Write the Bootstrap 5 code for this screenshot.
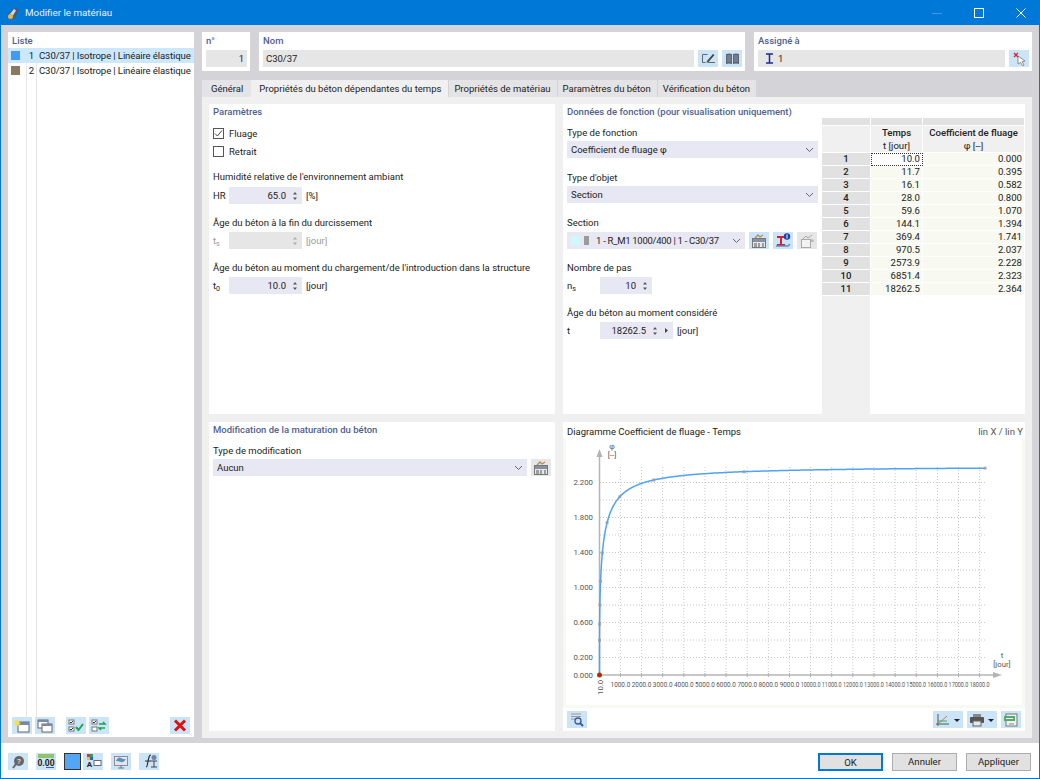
<!DOCTYPE html>
<html lang="fr">
<head>
<meta charset="UTF-8" />
<title>Modifier le matériau</title>
<link href="https://cdn.jsdelivr.net/npm/bootstrap@5.3.3/dist/css/bootstrap.min.css" rel="stylesheet" />
<style>
  html, body { height: 779px; overflow: hidden; }
  body { font: 9.5px/13px Roboto, "Noto Sans", sans-serif; color: #222; background: #fff; }
  .dlg { width: 1040px; height: 779px; border: 1px solid #0078d7; border-top: 0; display: flex; flex-direction: column; }
  .dlg-title { height: 25px; background: #0078d7; color: #e8f3fc; font-size: 9.8px; padding-left: 6px; gap: 5px; flex: none; }
  .win-btn { width: 37px; height: 25px; display: flex; align-items: center; justify-content: center; }
  .dlg-body { height: 718px; flex: none; background: #d4d4d8; padding: 7px 7px 6px; gap: 8px; display: flex; }
  .list-pane { width: 186px; background: #fff; display: flex; flex-direction: column; position: relative; }
  .pane-head { color: #50618f; font-weight: 500; padding: 2px 4px 0; height: 16px; flex: none; }
  .list-pane .list-group { flex: 1; border-radius: 0; background: linear-gradient(#e6e6e6,#e6e6e6) 18px 0/1px 100% no-repeat, linear-gradient(#e6e6e6,#e6e6e6) 28px 0/1px 100% no-repeat; }
  .list-pane .list-group-item { border: 0; padding: 0; height: 15px; display: flex; align-items: center; background: transparent; color: #222; font-size: 9.6px; letter-spacing: -.12px; white-space: nowrap; }
  .list-pane .list-group-item.active { background: #cce8ff; color: #222; }
  .swatch { width: 9px; height: 9px; margin-left: 3px; flex: none; }
  .row-num { width: 14px; text-align: right; flex: none; margin-right: 5px; }
  .list-tools { height: 20px; flex: none; padding: 0 4px; gap: 3px; display: flex; }
  .ico { width: 20px; height: 17px; background: #cce4f7; border: 0; padding: 0; display: inline-flex; align-items: center; justify-content: center; flex: none; }
  .ico.off { background: #e6e6e6; }
  .ico svg { display: block; }
  .main-col { width: 830px; display: flex; flex-direction: column; }
  .top-row { display: flex; gap: 9px; height: 39px; flex: none; margin-bottom: 9px; }
  .top-box { background: #fff; padding: 2px 3px 0 4px; }
  .top-box .pane-head { padding: 0; height: 16px; }
  .box-no { width: 48px; } .box-name { width: 486px; } .box-asg { width: 278px; }
  .grey-in { background: #e6e6e6; height: 17px; padding: 0 3px; display: flex; align-items: center; }
  .tab-strip.nav-tabs { height: 17px; border: 0; flex: none; gap: 1px; }
  .tab-strip .nav-link { height: 17px; padding: 0 6px 0 5px; border: 0; border-radius: 0; background: #e4e4e6; color: #222; font-size: 9.5px; line-height: 17px; margin: 0; }
  .tab-strip .nav-item:first-child { margin-right: -1px; }
  .tab-strip .nav-item:first-child .nav-link { padding: 0 8px 0 9px; }
  .tab-strip .nav-link.active { background: #f0f0f0; color: #222; padding: 0 7px 0 8px; }
  .tab-pane-box { flex: 1; background: #f0f0f0; padding: 7px; display: grid; grid-template-columns: 346px 462px; grid-template-rows: 310px 309px; column-gap: 8px; row-gap: 8px; }
  .panel-w { background: #fff; padding: 1px 4px 0; position: relative; min-width: 0; }
  .panel-w .pane-head { padding: 0; margin: 0; height: 14px; line-height: 13px; }
  .f-label { height: 13px; white-space: nowrap; margin-top: 12px; }
  .fld-row { display: flex; align-items: center; height: 17px; margin-top: 3px; }
  .fld-row .sym { width: 16px; flex: none; }
  .spin-box { background: #e8e8f4; height: 17px; display: flex; align-items: center; justify-content: flex-end; padding-right: 4px; gap: 6px; }
  .spin-box.off { background: #e6e6e6; }
  .spin-box .form-control { background: transparent; border: 0; border-radius: 0; box-shadow: none; padding: 0; text-align: right; font-size: 9.5px; line-height: 13px; min-height: 0; height: 13px; color: #222; flex: 1; min-width: 0; }
  .w73 { width: 73px; } .w52 { width: 52px; }
  .unit { margin-left: 4px; }
  .dim { color: #9a9a9a; }
  .chk-line { display: flex; align-items: center; height: 18px; margin: 0; gap: 5px; padding: 0; min-height: 0; }
  .chk-line .form-check-input { width: 11px; height: 11px; margin: 0; border: 1px solid #555; border-radius: 0; background-color: #fff; float: none; flex: none; }
  .chk-line .form-check-input:checked { background-color: #fff; border-color: #555; background-image: url("data:image/svg+xml,%3csvg xmlns='http://www.w3.org/2000/svg' viewBox='0 0 11 11'%3e%3cpath fill='none' stroke='%23444' d='M2 5.5l2.4 2.5L9 2.5'/%3e%3c/svg%3e"); background-size: 11px; }
  .chk-line .form-check-label { line-height: 13px; }
  .sel-w.form-select { background-color: #e8e8f4; border: 0; border-radius: 0; height: 17px; min-height: 0; margin-top: 2px; padding: 0 20px 0 4px; font-size: 9.5px; line-height: 17px; color: #222; background-image: url("data:image/svg+xml,%3csvg xmlns='http://www.w3.org/2000/svg' viewBox='0 0 9 6'%3e%3cpath fill='none' stroke='%23666' d='M1 1l3.5 3.5L8 1'/%3e%3c/svg%3e"); background-size: 9px 6px; background-position: right 4px center; box-shadow: none; }
  .func-col { width: 251px; }
  .sec-pick { width: 178px; height: 17px; background: #e8e8f4; display: flex; align-items: center; padding-left: 4px; white-space: nowrap; flex: none; }
  .sec-text { letter-spacing: -.28px; }
  .tbl-wrap { position: absolute; left: 259px; top: 14px; width: 203px; height: 296px; background: linear-gradient(#f0f0f0,#f0f0f0) 0 0/48px 100% no-repeat; }
  .tbl-wrap .table { --bs-table-bg: transparent; --bs-table-border-color: #fff; margin: 0; width: 203px; table-layout: fixed; font-size: 9.6px; color: #222; border-collapse: separate; border-spacing: 0; }
  .tbl-wrap .table th, .tbl-wrap .table td { padding: 0 2px; height: 13px; line-height: 12px; border: 0; border-right: 1px solid #fff; border-bottom: 1px solid #fff; font-weight: 400; vertical-align: middle; }
  .tbl-wrap thead tr:first-child th { height: 8px; background: #e1e1e1; padding: 0; line-height: 0; }
  .tbl-wrap thead tr.hd-row th { height: 26px; background: #f0f0f0; text-align: center; font-weight: 500; line-height: 13px; }
  .tbl-wrap thead tr.hd-row th span { font-weight: 400; }
  .tbl-wrap tbody th { background: #e1e1e1 !important; text-align: center; font-weight: 500 !important; }
  .tbl-wrap tbody td { background: #f8f9f0; text-align: right; padding-right: 3px; }
  .tbl-wrap tbody tr:first-child td:nth-child(2) { background: #fff; outline: 1px dotted #333; outline-offset: -1px; }
  .diag-top { display: flex; justify-content: space-between; height: 15px; padding-top: 2px; margin-right: -2px; }
  .diag-scale { color: #555; }
  .diag-area { position: absolute; left: 0; top: 16px; width: 462px; height: 270px; background: #f9f9f3; padding: 0 3px 3px 3px; }
  .diag-area svg { display: block; background: #fff; }
  .diag-area text { font: 7.8px Roboto, sans-serif; fill: #555; }
  .diag-tools { position: absolute; left: 4px; right: 4px; bottom: 3px; display: flex; justify-content: space-between; }
  .dlg-foot { flex: 1; display: flex; align-items: center; justify-content: space-between; padding: 2px 8px 0 7px; }
  .foot-btns { display: flex; gap: 8px; }
  .foot-btns .ico { width: 20px; }
  .colour-btn { width: 17px; height: 17px; background: #55a5f5; border: 1px solid #333; margin-right: -6px; }
  .btn-dlg.btn { width: 65px; height: 18px; padding: 0; border-radius: 0; background: #e1e1e1; border: 1px solid #adadad; font-size: 9.6px; line-height: 15px; color: #222; }
  .btn-dlg.btn-ok { border: 2px solid #0078d7; }
  .foot-actions { display: flex; gap: 9px; }
</style>
</head>
<body>
<svg width="0" height="0" class="position-absolute">
  <defs>
    <symbol id="i-sheet" viewBox="0 0 16 14"><rect x="4" y="3" width="11" height="10" fill="#fff" stroke="#666"/><rect x="4" y="3" width="11" height="3" fill="#7b8aa0"/></symbol>
    <symbol id="i-cal" viewBox="0 0 16 14"><rect x="1.500" y="4.500" width="13" height="9" fill="#e8e8e8" stroke="#777"/><rect x="2" y="5" width="12" height="3" fill="#8590a3"/><path d="M3 10h3M7 10h2M11 10h2M3 12h3M7 12h2M11 12h2" stroke="#555"/><path d="M4 4l3-3 2 2 3-2" fill="none" stroke="#b08d57" stroke-width="1.300"/></symbol>
    <symbol id="i-spin" viewBox="0 0 6 12"><path d="M1 4.500l2-2.500 2 2.500zM1 7.500l2 2.500 2-2.500z" fill="#555"/></symbol>
  </defs>
</svg>

<div class="dlg">
  <!-- barre de titre -->
  <div class="dlg-title d-flex align-items-center">
    <svg width="13" height="14" viewBox="0 0 13 14"><path d="M1 9l7-8 4 3-5 9H3z" fill="#4d5a73"/><path d="M3 8l4-5 2 1.500-3 5z" fill="#cfd8e6"/><circle cx="3.500" cy="10.500" r="2.500" fill="#e8b93a"/></svg>
    <span class="flex-grow-1">Modifier le matériau</span>
    <div class="win-btn"><svg width="10" height="10"><path d="M0 5.500h10" stroke="#3f9ae3"/></svg></div>
    <div class="win-btn"><svg width="10" height="10"><rect x=".5" y=".5" width="9" height="9" fill="none" stroke="#fff"/></svg></div>
    <div class="win-btn"><svg width="10" height="10"><path d="M.5.5l9 9M9.500.5l-9 9" stroke="#fff"/></svg></div>
  </div>

  <div class="dlg-body">
    <!-- liste -->
    <div class="list-pane">
      <div class="pane-head">Liste</div>
      <ul class="list-group" id="matList">
        <li class="list-group-item active"><span class="swatch" style="background:#3f9cf0"></span><span class="row-num">1</span>C30/37 | Isotrope | Linéaire élastique</li>
        <li class="list-group-item"><span class="swatch" style="background:#8c7860"></span><span class="row-num">2</span>C30/37 | Isotrope | Linéaire élastique</li>
      </ul>
      <div class="list-tools">
        <button class="ico"><svg width="16" height="14"><use href="#i-sheet"/><path d="M3 0l.8 2 2-.8-.8 2 2 .8-2 .8.8 2-2-.8-.8 2-.8-2-2 .8.800-2-2-.8 2-.8-.8-2 2 .8z" fill="#f4e04a"/></svg></button>
        <button class="ico"><svg width="16" height="14" viewBox="0 0 16 14"><rect x="1" y="1" width="10" height="8" fill="#fff" stroke="#666"/><rect x="1" y="1" width="10" height="2" fill="#7b8aa0"/><rect x="5" y="5" width="10" height="8" fill="#fff" stroke="#666"/><rect x="5" y="5" width="10" height="2" fill="#7b8aa0"/></svg></button>
        <button class="ico ms-2"><svg width="16" height="14" viewBox="0 0 16 14"><rect x="1" y="1" width="5" height="4" fill="#fff" stroke="#777"/><rect x="1" y="8" width="5" height="4" fill="#fff" stroke="#777"/><path d="M2 3l1 1 2-2M2 10l1 1 2-2" fill="none" stroke="#333"/><path d="M8 8l2.500 3L15 5" fill="none" stroke="#18a84a" stroke-width="2"/></svg></button>
        <button class="ico"><svg width="16" height="14" viewBox="0 0 16 14"><rect x="1" y="1" width="5" height="4" fill="#fff" stroke="#777"/><rect x="1" y="8" width="5" height="4" fill="#fff" stroke="#777"/><path d="M2 3l1 1 2-2" fill="none" stroke="#333"/><path d="M8 5h6l-2-2M14 9H8l2 2" fill="none" stroke="#18a84a" stroke-width="1.500"/></svg></button>
        <button class="ico ms-auto"><svg width="14" height="13" viewBox="0 0 14 13"><path d="M2 1.500l10 10M12 1.500l-10 10" stroke="#e01010" stroke-width="3"/></svg></button>
      </div>
    </div>

    <div class="main-col">
      <div class="top-row">
        <div class="top-box box-no">
          <div class="pane-head">n°</div>
          <div class="grey-in justify-content-end">1</div>
        </div>
        <div class="top-box box-name">
          <div class="pane-head">Nom</div>
          <div class="d-flex">
            <div class="grey-in flex-grow-1 me-1">C30/37</div>
            <button class="ico me-1"><svg width="15" height="13" viewBox="0 0 15 13"><path d="M1.500 2.500h5M1.500 2.500v8h3M7 10.500h7" fill="none" stroke="#666"/><path d="M6 9l6-7 1.500 1-6 7-2 .8z" fill="#444"/></svg></button>
            <button class="ico"><svg width="15" height="13" viewBox="0 0 15 13"><path d="M1 2q3-1 6 0v10q-3-1-6 0zM8 2q3-1 6 0v10q-3-1-6 0z" fill="#5d6470"/><path d="M3 3v7M5 3v7M10 3v7M12 3v7" stroke="#a7adb7" stroke-width=".7"/></svg></button>
          </div>
        </div>
        <div class="top-box box-asg">
          <div class="pane-head">Assigné à</div>
          <div class="d-flex gap-1">
            <div class="grey-in flex-grow-1"><svg width="9" height="11" viewBox="0 0 9 11" class="me-1 ms-1"><path d="M1 1h7M1 10h7M4.500 1v9" stroke="#1a2a9a" stroke-width="1.500" fill="none"/></svg>1</div>
            <button class="ico"><svg width="15" height="14" viewBox="0 0 15 14"><path d="M6 4l7 5-3 .5 2 3.500-1.500.8-2-3.500L6 12z" fill="#fff" stroke="#777" stroke-width=".8"/><path d="M2 1l4 4M6 1L2 5" stroke="#d8202a" stroke-width="1.300"/></svg></button>
          </div>
        </div>
      </div>

      <ul class="nav nav-tabs tab-strip">
        <li class="nav-item"><a class="nav-link" href="#">Général</a></li>
        <li class="nav-item"><a class="nav-link active" href="#">Propriétés du béton dépendantes du temps</a></li>
        <li class="nav-item"><a class="nav-link" href="#">Propriétés de matériau</a></li>
        <li class="nav-item"><a class="nav-link" href="#">Paramètres du béton</a></li>
        <li class="nav-item"><a class="nav-link" href="#">Vérification du béton</a></li>
      </ul>

      <div class="tab-pane-box">
        <!-- Paramètres -->
        <section class="panel-w">
          <div class="pane-head">Paramètres</div>
          <div class="form-check chk-line" style="margin-top:5px"><input class="form-check-input" type="checkbox" id="chkF" checked><label class="form-check-label" for="chkF">Fluage</label></div>
          <div class="form-check chk-line"><input class="form-check-input" type="checkbox" id="chkR"><label class="form-check-label" for="chkR">Retrait</label></div>
          <div class="f-label" style="margin-top:10px">Humidité relative de l'environnement ambiant</div>
          <div class="fld-row" style="margin-top:4px"><span class="sym">HR</span><div class="spin-box w73"><input class="form-control" value="65.0"><svg width="6" height="12"><use href="#i-spin"/></svg></div><span class="unit">[%]</span></div>
          <div class="f-label">Âge du béton à la fin du durcissement</div>
          <div class="fld-row dim"><span class="sym">t<sub>s</sub></span><div class="spin-box off w73"><input class="form-control" disabled value=""><svg width="6" height="12" viewBox="0 0 6 12"><path d="M1 4.500l2-2.500 2 2.500zM1 7.500l2 2.500 2-2.500z" fill="#aaa"/></svg></div><span class="unit">[jour]</span></div>
          <div class="f-label">Âge du béton au moment du chargement/de l'introduction dans la structure</div>
          <div class="fld-row"><span class="sym">t<sub>0</sub></span><div class="spin-box w73"><input class="form-control" value="10.0"><svg width="6" height="12"><use href="#i-spin"/></svg></div><span class="unit">[jour]</span></div>
        </section>

        <!-- Données de fonction -->
        <section class="panel-w">
          <div class="pane-head">Données de fonction (pour visualisation uniquement)</div>
          <div class="func-col">
            <div class="f-label" style="margin-top:7px">Type de fonction</div>
            <select class="form-select sel-w"><option>Coefficient de fluage φ</option></select>
            <div class="f-label" style="margin-top:13px">Type d'objet</div>
            <select class="form-select sel-w"><option>Section</option></select>
            <div class="f-label" style="margin-top:13px">Section</div>
            <div class="d-flex gap-1" style="margin-top:3px">
              <div class="sec-pick"><span class="swatch" style="background:#ccfbfb;margin:0 4px 0 0"></span><span class="swatch" style="background:#9a9a9a;width:5px;margin:0 7px 0 0"></span><span class="sec-text">1 - R_M1 1000/400 | 1 - C30/37</span><svg class="ms-auto me-1" width="9" height="6" viewBox="0 0 9 6"><path d="M1 1l3.500 3.500L8 1" fill="none" stroke="#666"/></svg></div>
              <button class="ico"><svg width="16" height="14"><use href="#i-cal"/></svg></button>
              <button class="ico"><svg width="16" height="15" viewBox="0 0 16 15"><path d="M2 3h8v2H7v6h3v2H2v-2h3V5H2z" fill="#d8202a"/><path d="M1 13h12l2-2" fill="none" stroke="#5a8fc8" stroke-width="1.500"/><circle cx="12" cy="3.500" r="3.200" fill="#1b3fb0"/><path d="M12 1.500v4" stroke="#fff"/></svg></button>
              <button class="ico off"><svg width="16" height="14" viewBox="0 0 16 14"><rect x="2.500" y="5.500" width="9" height="8" fill="#f2f2f2" stroke="#aaa"/><path d="M4 5l3-3 2 2 4-3M13 5v3M12 7h3" fill="none" stroke="#aaa"/></svg></button>
            </div>
            <div class="f-label">Nombre de pas</div>
            <div class="fld-row"><span class="sym" style="width:33px">n<sub>s</sub></span><div class="spin-box w52"><input class="form-control" value="10"><svg width="6" height="12"><use href="#i-spin"/></svg></div></div>
            <div class="f-label">Âge du béton au moment considéré</div>
            <div class="fld-row"><span class="sym" style="width:33px">t</span><div class="spin-box w73"><input class="form-control" value="18262.5"><svg width="6" height="12"><use href="#i-spin"/></svg><svg width="5" height="7" viewBox="0 0 5 7"><path d="M1 1l3 2.500-3 2.500z" fill="#444"/></svg></div><span class="unit">[jour]</span></div>
          </div>
          <div class="tbl-wrap">
            <table class="table">
              <colgroup><col style="width:49px"><col style="width:52px"><col style="width:102px"></colgroup>
              <thead>
                <tr><th></th><th></th><th></th></tr>
                <tr class="hd-row"><th></th><th>Temps<br><span>t [jour]</span></th><th>Coefficient de fluage<br><span>φ [--]</span></th></tr>
              </thead>
              <tbody id="creepRows"></tbody>
            </table>
          </div>
        </section>

        <!-- Modification de la maturation -->
        <section class="panel-w">
          <div class="pane-head">Modification de la maturation du béton</div>
          <div class="f-label" style="margin-top:7px">Type de modification</div>
          <div class="d-flex gap-1">
            <select class="form-select sel-w flex-grow-1"><option>Aucun</option></select>
            <button class="ico off mt-auto"><svg width="16" height="14"><use href="#i-cal"/></svg></button>
          </div>
        </section>

        <!-- Diagramme -->
        <section class="panel-w">
          <div class="diag-top"><span>Diagramme Coefficient de fluage - Temps</span><span class="diag-scale">lin X / lin Y</span></div>
          <div class="diag-area">
            <svg id="chart" width="456" height="267" viewBox="566 438 456 267"></svg>
          </div>
          <div class="diag-tools">
            <button class="ico"><svg width="16" height="14" viewBox="0 0 16 14"><path d="M2 1h10M2 3.500h10M2 6h5" stroke="#999"/><circle cx="9" cy="8" r="3" fill="#cfe2f5" stroke="#3c5a90" stroke-width="1.300"/><path d="M11 10l3 3" stroke="#3c5a90" stroke-width="2"/></svg></button>
            <div class="d-flex gap-1">
              <button class="ico" style="width:30px"><svg width="26" height="14" viewBox="0 0 26 14"><path d="M3 1v12M1 11h13" stroke="#555"/><path d="M3 11L12 3" stroke="#c9794a"/><path d="M3 8h9" stroke="#39a36c"/><path d="M19 6l3 3 3-3z" fill="#222"/></svg></button>
              <button class="ico" style="width:30px"><svg width="26" height="14" viewBox="0 0 26 14"><path d="M4 1h8v3H4z" fill="#888"/><rect x="1" y="4" width="14" height="6" rx="1" fill="#555"/><rect x="4" y="8" width="8" height="5" fill="#e8e8e8" stroke="#666"/><path d="M19 6l3 3 3-3z" fill="#222"/></svg></button>
              <button class="ico"><svg width="16" height="14" viewBox="0 0 16 14"><rect x="3" y="1" width="11" height="12" fill="#eef3ee" stroke="#777"/><rect x="1" y="3" width="11" height="5" fill="#57a86b"/><path d="M3 5.500h7" stroke="#fff"/><path d="M6 10h5v3H6z" fill="#bbb"/></svg></button>
            </div>
          </div>
        </section>
      </div>
    </div>
  </div>

  <!-- pied de fenêtre -->
  <div class="dlg-foot">
    <div class="foot-btns">
      <button class="ico"><svg width="14" height="14" viewBox="0 0 14 14"><circle cx="8" cy="6" r="5" fill="#666"/><path d="M5 9l-3 4" stroke="#666" stroke-width="2"/><text x="8" y="9" font-size="8" fill="#fff" text-anchor="middle">?</text></svg></button>
      <button class="ico"><svg width="18" height="15" viewBox="0 0 18 15"><rect x="1" y="0" width="16" height="4" fill="#8fc46f"/><text x="9" y="12" font-size="8.500" font-weight="700" fill="#222" text-anchor="middle">0.00</text><path d="M9 13.500h8" stroke="#2a5fd0"/></svg></button>
      <div class="colour-btn"></div>
      <button class="ico"><svg width="18" height="15" viewBox="0 0 18 15"><rect x="3" y="0" width="3" height="3" fill="#e03030"/><rect x="6" y="0" width="3" height="3" fill="#30a050"/><rect x="3" y="3" width="3" height="3" fill="#f0c030"/><rect x="6" y="3" width="3" height="3" fill="#3060d0"/><text x="5.500" y="13" font-size="8" font-weight="700" fill="#222" text-anchor="middle">A</text><rect x="10" y="6.500" width="7" height="5" fill="#fff" stroke="#667"/></svg></button>
      <button class="ico"><svg width="16" height="15" viewBox="0 0 16 15"><rect x="1.500" y="2.500" width="13" height="9" fill="#dfe6ee" stroke="#8a8f99"/><path d="M3 7q2-5 5-3t5 1q-2 4-5 3t-5-1z" fill="#5e8dbd"/><path d="M8 11v3M5 14h6" stroke="#777"/></svg></button>
      <button class="ico"><svg width="17" height="15" viewBox="0 0 17 15"><path d="M5 13q1 0 1.500-3T8 3q.5-2 2-2" fill="none" stroke="#333" stroke-width="1.200"/><path d="M4 7h6" stroke="#333"/><path d="M10 7h6M13 7v6M10 13h6" stroke="#444"/><circle cx="13" cy="3.500" r="2.500" fill="#6f7fae"/></svg></button>
    </div>
    <div class="foot-actions">
      <button class="btn btn-dlg btn-ok">OK</button>
      <button class="btn btn-dlg">Annuler</button>
      <button class="btn btn-dlg">Appliquer</button>
    </div>
  </div>
</div>

<script src="https://cdn.jsdelivr.net/npm/bootstrap@5.3.3/dist/js/bootstrap.bundle.min.js"></script>
<script>
const creep = [[10.0,0.000],[11.7,0.395],[16.1,0.582],[28.0,0.800],[59.6,1.070],[144.1,1.394],[369.4,1.741],[970.5,2.037],[2573.9,2.228],[6851.4,2.323],[18262.5,2.364]];

document.getElementById('creepRows').innerHTML = creep.map((r, i) =>
  `<tr><th>${i + 1}</th><td>${r[0].toFixed(1)}</td><td>${r[1].toFixed(3)}</td></tr>`).join('');

// repere: memes coordonnees que la fenetre
const X = t => 599.5 + (t - 10) * 0.02113;
const Y = v => 675 - v * 87.5;
let s = '';
for (let k = 1; k <= 18; k++) {
  const x = X(k * 1000);
  s += `<path d="M${x} 467V675" stroke="#c8c8c8" stroke-dasharray="1 2"/><path d="M${x} 673V677" stroke="#aaa"/>`;
  // libelles serres pour tenir dans un pas de 1000
  s += `<text transform="translate(${x} 687) scale(${k < 10 ? .82 : .7} 1)" text-anchor="middle">${k * 1000}.0</text>`;
}
for (let k = 1; k <= 11; k++) {
  const y = Y(k * 0.2);
  s += `<path d="M600 ${y}H986" stroke="#c8c8c8" stroke-dasharray="1 2"/>`;
}
[0, 0.2, 0.6, 1, 1.4, 1.8, 2.2].forEach(v => {
  s += `<text x="593" y="${Y(v) + 2.500}" text-anchor="end">${v.toFixed(3)}</text>`;
});
s += '<path d="M599.500 675V452" stroke="#b4b4b4" stroke-width="1.500"/><path d="M599.500 449l-3 8h6z" fill="#b4b4b4"/>';
s += '<path d="M599.500 675H998" stroke="#b4b4b4" stroke-width="1.500"/><path d="M1002 675l-9-3v6z" fill="#b4b4b4"/>';
s += '<text x="612" y="449" text-anchor="middle">φ</text><text x="612" y="458" text-anchor="middle">[--]</text>';
s += '<text x="1002" y="658" text-anchor="middle">t</text><text x="1002" y="667" text-anchor="middle">[jour]</text>';
s += '<text transform="translate(603 695) rotate(-90)">10.0</text>';

// courbe de fluage: phi = 2.39 * (d / (674 + d))^0.3
let pts = [];
for (let i = 0; i <= 300; i++) {
  const d = 18252.5 * Math.pow(i / 300, 3);
  pts.push(X(10 + d).toFixed(2) + ',' + Y(2.39 * Math.pow(d / (674 + d), 0.3)).toFixed(2));
}
s += `<polyline points="${pts.join(' ')}" fill="none" stroke="#4ea3f5" stroke-width="1.500"/>`;
creep.slice(1).forEach(r => {
  s += `<rect x="${X(r[0]) - 1.5}" y="${Y(r[1]) - 1.5}" width="3" height="3" fill="#9a9a9a" opacity=".75"/>`;
});
s += `<circle cx="599.500" cy="675" r="2.500" fill="#b03000"/>`;
document.getElementById('chart').innerHTML = s;
</script>
</body>
</html>
